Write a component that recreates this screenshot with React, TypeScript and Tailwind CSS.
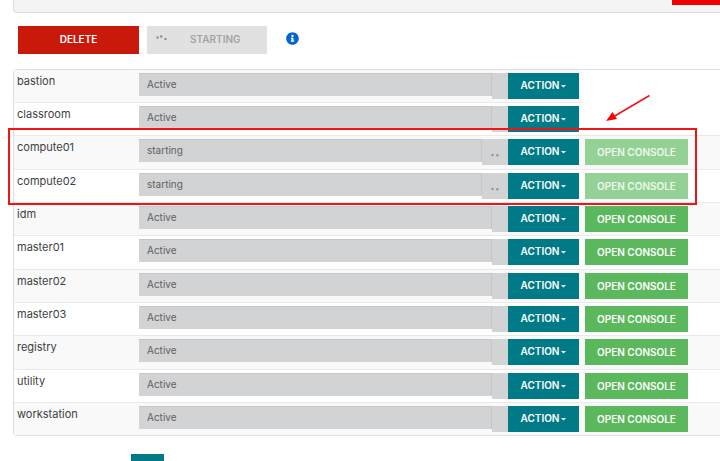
interface Vm {
  name: string;
  status: 'Active' | 'starting';
  hasConsole: boolean;
}

const vms: Vm[] = [
  { name: 'bastion', status: 'Active', hasConsole: false },
  { name: 'classroom', status: 'Active', hasConsole: false },
  { name: 'compute01', status: 'starting', hasConsole: true },
  { name: 'compute02', status: 'starting', hasConsole: true },
  { name: 'idm', status: 'Active', hasConsole: true },
  { name: 'master01', status: 'Active', hasConsole: true },
  { name: 'master02', status: 'Active', hasConsole: true },
  { name: 'master03', status: 'Active', hasConsole: true },
  { name: 'registry', status: 'Active', hasConsole: true },
  { name: 'utility', status: 'Active', hasConsole: true },
  { name: 'workstation', status: 'Active', hasConsole: true },
];

function InfoIcon() {
  return (
    <svg viewBox="0 0 512 512" className="size-[13px]" fill="#0066cc" aria-hidden="true">
      <path d="M256 8C119 8 8 119 8 256s111 248 248 248 248-111 248-248S393 8 256 8zm0 102a46 46 0 1 1 0 92 46 46 0 0 1 0-92zm64 262c0 7-5 12-12 12H204c-7 0-12-5-12-12v-28c0-7 5-12 12-12h16v-56h-16c-7 0-12-5-12-12v-28c0-7 5-12 12-12h76c7 0 12 5 12 12v96h16c7 0 12 5 12 12v28z" />
    </svg>
  );
}

function VmRow({ vm }: { vm: Vm }) {
  const starting = vm.status === 'starting';
  const cell = 'border-t border-[#e9e9e9] p-0 pt-[3px] align-top group-first:border-t-0 group-odd:bg-[#f9f9f9]';

  return (
    <tr className="group h-[33px] first:h-8 nth-[3n]:h-[34px]">
      <th scope="row" className={`${cell} text-left font-normal`}>
        <label htmlFor={`status-${vm.name}`} className="block pl-[3px] text-[11px] leading-4 text-[#3c3f42]">
          {vm.name}
        </label>
      </th>
      <td className={cell}>
        <div className="flex items-start">
          <input
            id={`status-${vm.name}`}
            value={vm.status}
            readOnly
            className="h-[23px] min-w-0 flex-1 border-t border-r border-[#c6c6c7] bg-[#d2d3d5] pb-[2px] pl-2 text-[10px] leading-4 text-[#5f6062] outline-none"
          />
          {starting ? (
            <span className="flex h-[26px] w-[26px] items-center justify-center bg-[#d2d3d5]">
              <svg viewBox="0 0 10 10" className="mt-1 size-[10px]" fill="#929394" aria-hidden="true">
                <circle cx="2.5" cy="6" r="1.2" />
                <circle cx="7.3" cy="6.3" r="1.2" />
              </svg>
            </span>
          ) : (
            <span className="h-[26px] w-4 bg-[#d2d3d5]" />
          )}
        </div>
      </td>
      <td className={cell}>
        <button
          type="button"
          className="flex h-[26px] w-[71px] items-center justify-center gap-[2px] bg-[#007a87] pb-px text-[10px] font-semibold text-white"
        >
          ACTION
          <svg viewBox="0 0 5 3" className="mt-[2px] h-[3px] w-[5px]" fill="currentColor" aria-hidden="true">
            <path d="M0 0h5L2.5 2.6z" />
          </svg>
        </button>
      </td>
      {vm.hasConsole && (
        <td className={`${cell} pl-[3px]`}>
          <button
            type="button"
            disabled={starting}
            className="block h-[26px] w-[103px] bg-[#5cb85c] text-center text-[10px] font-semibold whitespace-nowrap text-white disabled:bg-[#94d194] disabled:text-[#eef8ee]"
          >
            OPEN CONSOLE
          </button>
        </td>
      )}
    </tr>
  );
}

export default function App() {
  return (
    <div className="overflow-hidden bg-white font-['Inter',sans-serif]">
      <header className="ml-[13px] flex h-[13px] items-start justify-end rounded-bl-sm border-b border-l border-[#dfdfdf] bg-[#f4f4f4]">
        <div className="h-[5px] w-12 bg-[#ee0000]" />
      </header>

      <div className="mt-[13px] ml-[18px] flex items-center">
        <button type="button" className="h-7 w-[121px] bg-[#c9190b] pb-px text-[10px] font-semibold text-white">
          DELETE
        </button>
        <button
          type="button"
          disabled
          className="ml-2 flex h-7 w-[120px] items-center bg-[#e1e1e1] pb-px pl-2 text-[10px] font-semibold text-[#a3a4a6]"
        >
          <svg viewBox="0 0 12 8" className="mb-1 h-2 w-3" fill="#8e8f90" aria-hidden="true">
            <circle cx="2.5" cy="3.5" r="1.2" />
            <circle cx="6.2" cy="2.5" r="1.2" />
            <circle cx="10.5" cy="5" r="1.2" />
          </svg>
          <span className="ml-[23px]">STARTING</span>
        </button>
        <button type="button" aria-label="Information" className="mb-[3px] ml-[19px]">
          <InfoIcon />
        </button>
      </div>

      <main className="relative mt-[15px] ml-[13px] rounded-l-sm border-y border-l border-[#dfdfdf]">
        <table className="w-full table-fixed border-separate border-spacing-0">
          <colgroup>
            <col className="w-[125px]" />
            <col />
            <col className="w-[74px]" />
            <col className="w-[138px]" />
          </colgroup>
          <tbody>
            {vms.map((vm) => (
              <VmRow key={vm.name} vm={vm} />
            ))}
          </tbody>
        </table>

        {/* Callout around the machines that are still booting */}
        <div className="pointer-events-none absolute top-[58px] right-[23px] -left-[6px] h-[77px] border-2 border-[#f01414]" />
        <svg
          viewBox="0 0 46 28"
          className="pointer-events-none absolute top-6 right-[69px] h-7 w-[46px]"
          aria-hidden="true"
        >
          <path d="M44.5 1.5L8 23" stroke="#f01414" strokeWidth="1.5" fill="none" />
          <path d="M1 27l6.5-9 4.5 7z" fill="#ff0000" />
        </svg>
      </main>

      <footer className="mt-[18px] ml-[131px]">
        <div className="h-[7px] w-[33px] bg-[#007a87]" />
      </footer>
    </div>
  );
}
